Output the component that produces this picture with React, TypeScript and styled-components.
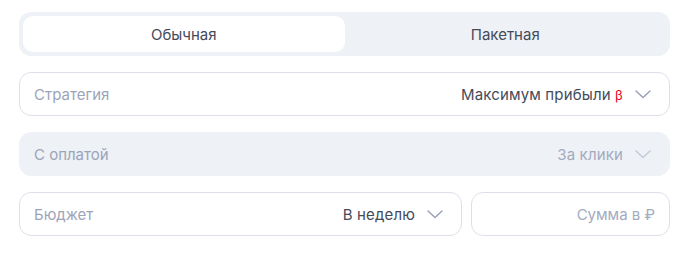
import React, { useState } from 'react';
import styled, { createGlobalStyle } from 'styled-components';

const GlobalStyle = createGlobalStyle`
  body {
    margin: 0;
    background: #ffffff;
    font-family: Inter, "Noto Sans", "Liberation Sans", sans-serif;
  }
`;

const Chevron: React.FC<{ muted?: boolean }> = ({ muted }) => (
  <ChevronSvg width="16" height="9" viewBox="0 0 16 9" muted={muted}>
    <path d="M1 1 L8 7.5 L15 1" fill="none" strokeWidth="1.5" strokeLinecap="round" strokeLinejoin="round" />
  </ChevronSvg>
);

const App: React.FC = () => {
  const [mode, setMode] = useState('single');
  return (
    <Page>
      <GlobalStyle />
      <Tabs>
        <Tab active={mode === 'single'} onClick={() => setMode('single')}>Обычная</Tab>
        <Tab active={mode === 'batch'} onClick={() => setMode('batch')}>Пакетная</Tab>
      </Tabs>
      <Field>
        <Label>Стратегия</Label>
        <Value>
          Максимум прибыли <Beta>β</Beta>
        </Value>
        <Chevron />
      </Field>
      <Field disabled>
        <Label>С оплатой</Label>
        <Value muted>За клики</Value>
        <Chevron muted />
      </Field>
      <Row>
        <Field>
          <Label>Бюджет</Label>
          <Value>В неделю</Value>
          <Chevron />
        </Field>
        <AmountField>
          <AmountPlaceholder>Сумма в ₽</AmountPlaceholder>
        </AmountField>
      </Row>
    </Page>
  );
};

const Page = styled.div`
  width: 651px;
  padding: 12px 0 0 19px;
  display: flex;
  flex-direction: column;
  gap: 16px;
`;

const Tabs = styled.div`
  display: flex;
  height: 44px;
  box-sizing: border-box;
  padding: 4px;
  border-radius: 12px;
  background: #eef1f6;
`;

const Tab = styled.div<{ active?: boolean }>`
  flex: 1;
  display: flex;
  align-items: center;
  justify-content: center;
  border-radius: 10px;
  font-size: 15px;
  color: #454a59;
  cursor: pointer;
  background: ${({ active }) => (active ? '#ffffff' : 'transparent')};
`;

const Field = styled.div<{ disabled?: boolean }>`
  flex: 1 0 auto;
  min-width: 0;
  display: flex;
  align-items: center;
  height: 44px;
  box-sizing: border-box;
  padding: 0 18px 0 14px;
  border-radius: 12px;
  border: 1px solid ${({ disabled }) => (disabled ? '#eef1f6' : '#dde0e9')};
  background: ${({ disabled }) => (disabled ? '#eef1f6' : '#ffffff')};
  font-size: 15px;
`;

const Label = styled.span`
  flex: 1;
  color: #9ca4b8;
`;

const Value = styled.span<{ muted?: boolean }>`
  color: ${({ muted }) => (muted ? '#a3abbe' : '#454a59')};
  margin-right: 12px;
  letter-spacing: 0.15px;
`;

const Beta = styled.span`
  color: #e8001c;
  font-size: 13px;
`;

const ChevronSvg = styled.svg<{ muted?: boolean }>`
  stroke: ${({ muted }) => (muted ? '#c5cad8' : '#9aa1b5')};
  flex-shrink: 0;
`;

const Row = styled.div`
  display: flex;
  gap: 9px;
`;

const AmountField = styled.div`
  width: 199px;
  flex-shrink: 0;
  display: flex;
  align-items: center;
  justify-content: flex-end;
  height: 44px;
  box-sizing: border-box;
  padding: 0 14px;
  border-radius: 12px;
  border: 1px solid #dde0e9;
  font-size: 15px;
`;

const AmountPlaceholder = styled.span`
  color: #a3abbe;
`;

export default App;
